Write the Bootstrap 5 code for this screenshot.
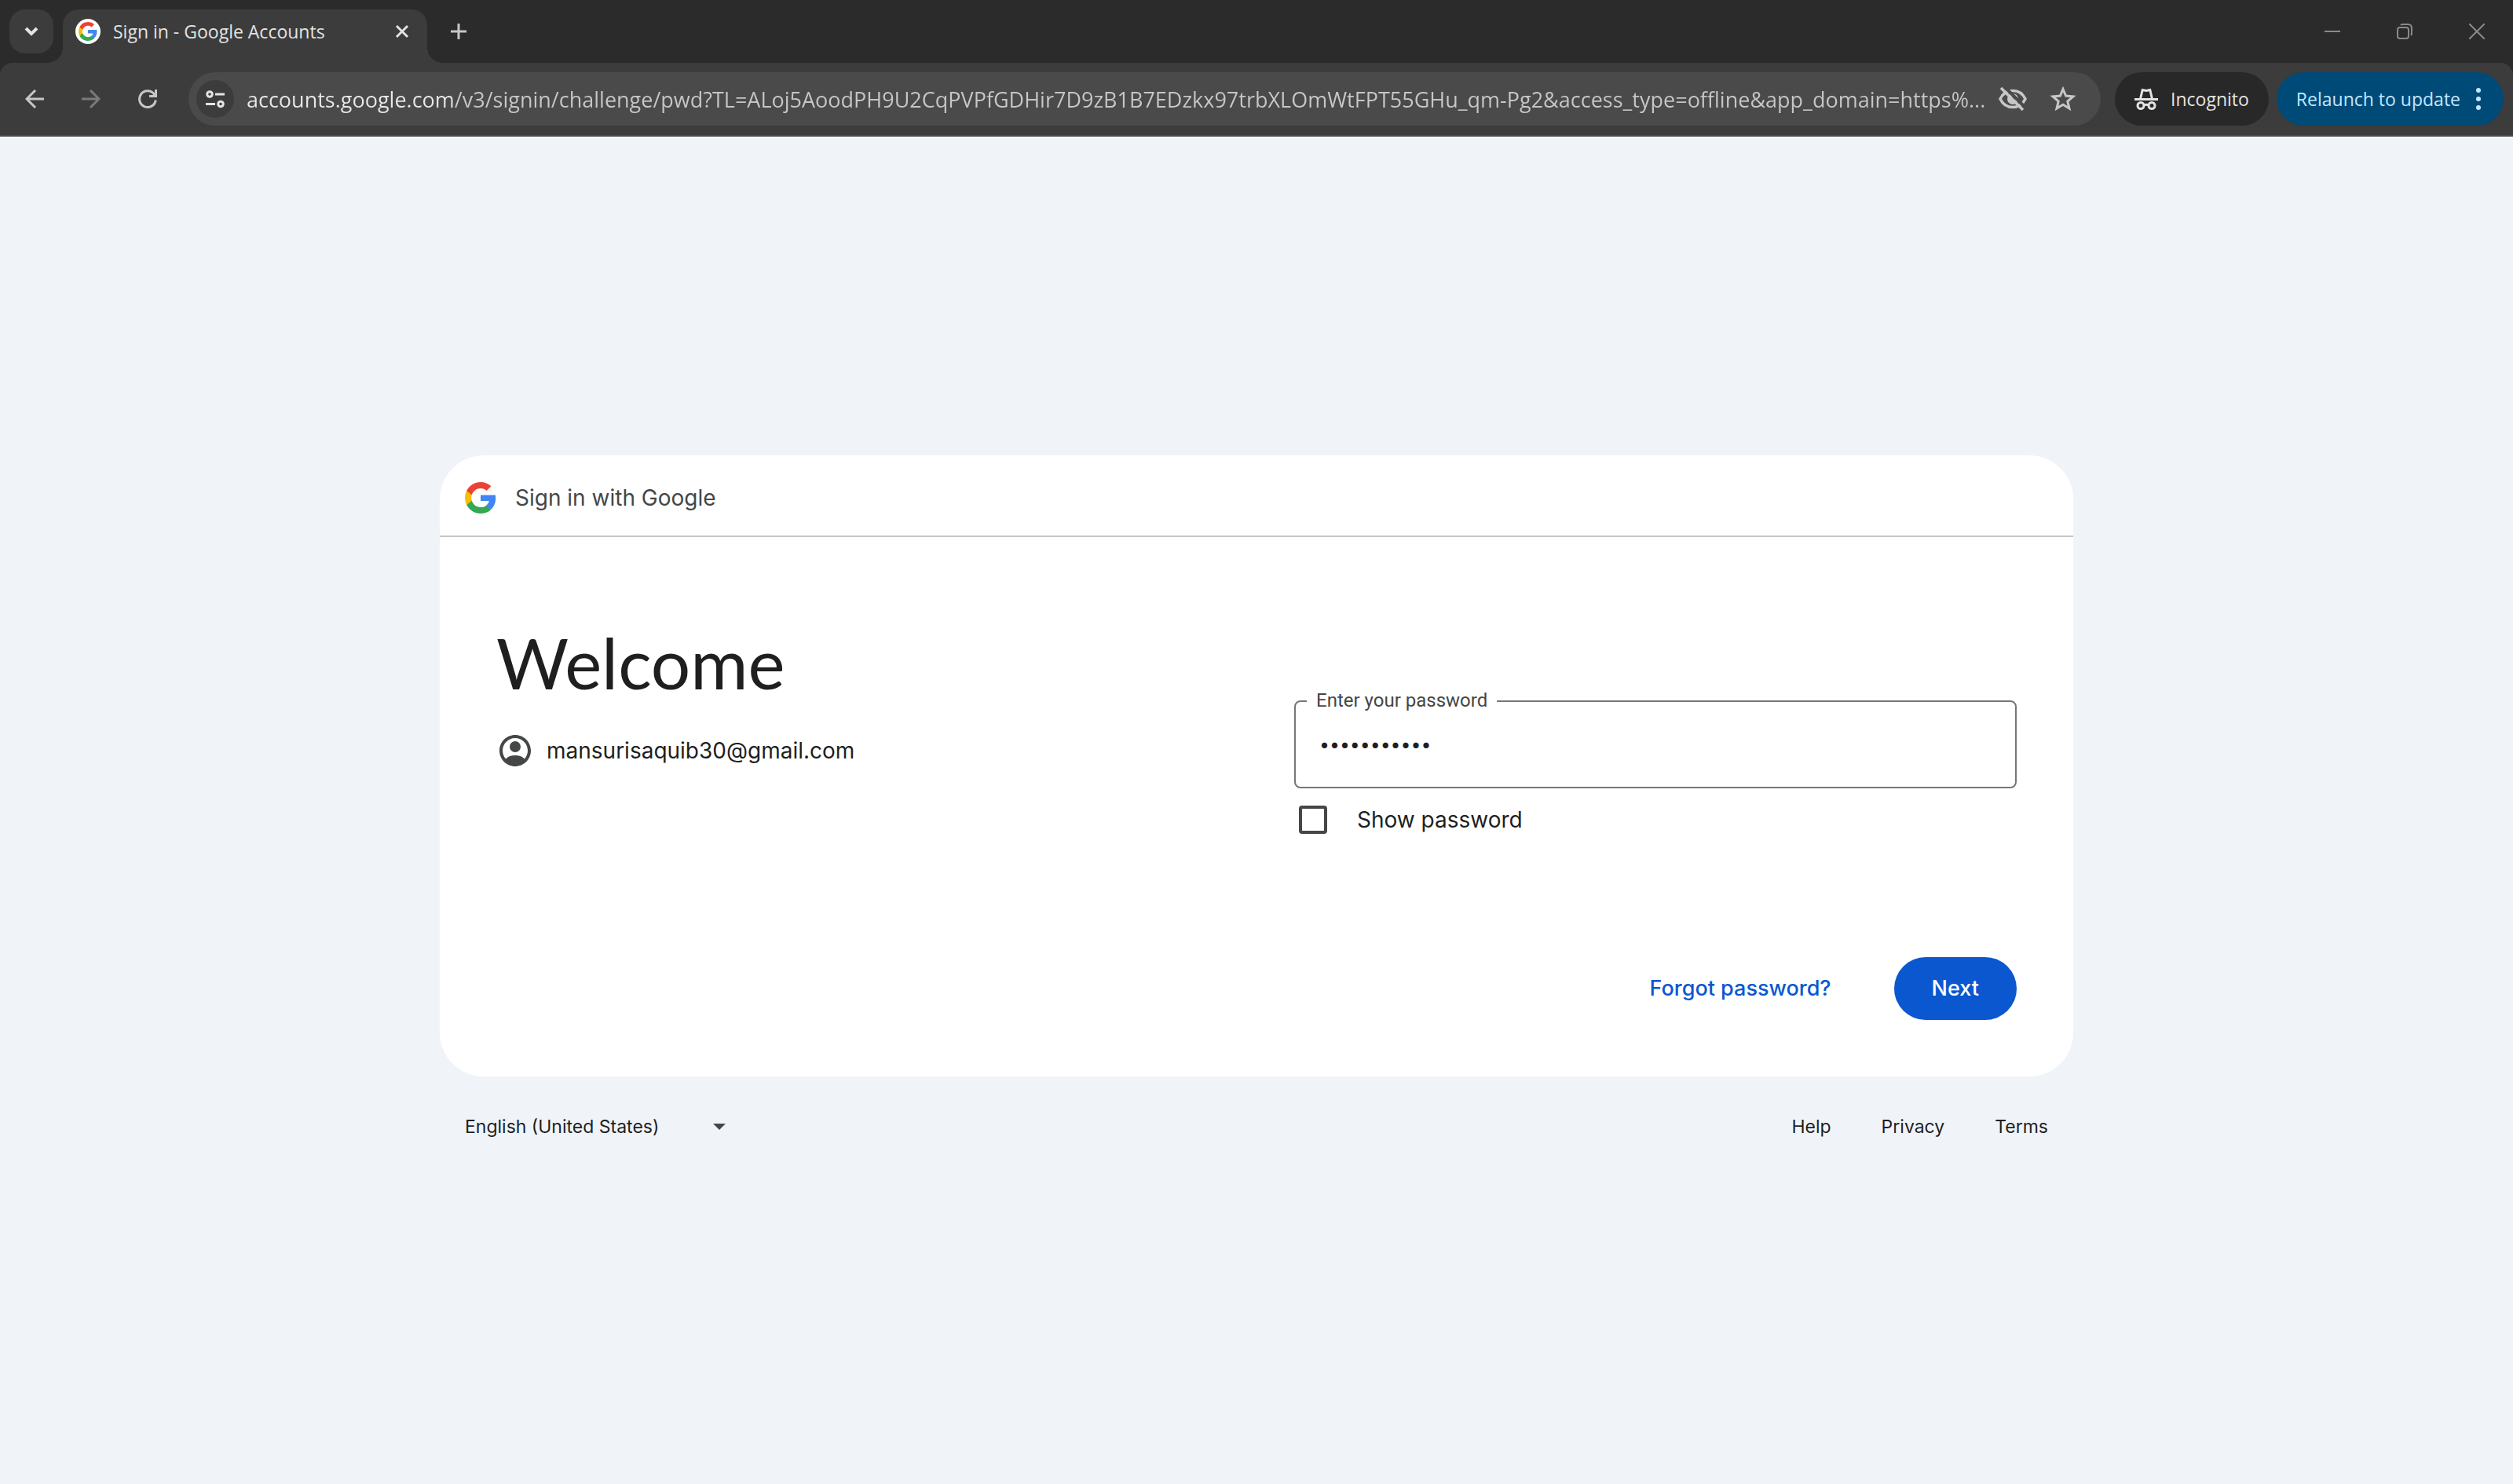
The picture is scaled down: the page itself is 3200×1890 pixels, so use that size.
<!DOCTYPE html>
<html lang="en">
<head>
<meta charset="utf-8">
<meta name="viewport" content="width=device-width, initial-scale=1">
<title>Sign in - Google Accounts</title>
<link rel="stylesheet" href="https://cdn.jsdelivr.net/npm/bootstrap@5.3.0/dist/css/bootstrap.min.css">
<style>
  body { background: #f0f4f9; color: #1f1f1f; font: 400 28px/40px Inter, sans-serif; }
  svg { display: block; flex: none; }
  button { background: none; border: 0; padding: 0; color: inherit; font: inherit; }

  /* browser frame */
  .frame { font: 400 23px/32px "Open Sans", "Noto Sans", sans-serif; color: #e3e3e3; background: #2b2b2b; }
  .strip { height: 80px; padding-left: 12px; }
  .tab-search { width: 56px; height: 56px; border-radius: 20px; background: #3c3c3c; }
  .tab-item { position: relative; width: 464px; height: 68px; margin-left: 12px; padding: 0 22px 12px 16px; border-radius: 20px 20px 0 0; background: #3c3c3c; }
  .tab-item::before, .tab-item::after { content: ""; position: absolute; bottom: 0; width: 20px; height: 20px; }
  .tab-item::before { right: 100%; background: radial-gradient(circle at 0 0, transparent 20px, #3c3c3c 20px); }
  .tab-item::after { left: 100%; background: radial-gradient(circle at 100% 0, transparent 20px, #3c3c3c 20px); }
  .favicon { width: 32px; height: 32px; background: #fff; }
  .tab-add { width: 80px; height: 56px; }
  .win-btn { width: 92px; height: 80px; color: #8a8a8a; }
  .tools { height: 94px; padding: 0 12px 0 8px; background: #3c3c3c; border-bottom: 2px solid #4a4a4a; border-radius: 16px 16px 0 0; }
  .tool-btn { width: 72px; height: 68px; color: #c7c7c7; }
  .tool-btn:disabled { color: #7a7a7a; }
  .omnibox { height: 68px; margin: 0 18px 0 16px; padding: 0 30px 0 10px; border-radius: 34px; background: #4a4a4a; color: #c7c7c7; }
  .site-info { width: 48px; height: 48px; background: #3c3c3c; color: #e3e3e3; }
  .url-input { min-width: 0; height: 48px; margin-left: 16px; padding: 0; border: 0; outline: 0; font-size: 27px; color: #c7c7c7; background: linear-gradient(90deg, #e8e8e8 262px, #c7c7c7 262px); -webkit-background-clip: text; background-clip: text; -webkit-text-fill-color: transparent; }
  .omni-actions { gap: 28px; }
  .chip { height: 68px; padding: 0 25px; border-radius: 34px; background: #282828; white-space: nowrap; }
  .chip-update { margin-left: 10px; background: #004a77; color: #c2e7ff; }

  /* sign-in page */
  .stage { min-height: calc(100vh - 174px); }
  .panel { width: 65%; }
  .sheet { border-radius: 56px; background: #fff; }
  .sheet-head { height: 104px; padding: 6px 32px 0; border-bottom: 2px solid #c4c7c5; color: #444746; }
  .sheet-body { padding: 108px 72px 72px; }
  .cols { display: grid; grid-template-columns: 1fr 1fr; gap: 96px; }
  h1 { font: 400 89px/104px Lato, sans-serif; margin: 0 0 36px; }
  .form-col { padding-top: 100px; }
  .pwd-input { width: 100%; height: 112px; padding: 0 30px; border: 2px solid #747775; border-radius: 8px; font: 400 23px/40px Inter, sans-serif; color: #1f1f1f; background: #fff; outline: 0; }
  .pwd-label { position: absolute; left: 16px; top: -16px; padding: 0 12px; font: 400 24px/32px Roboto, sans-serif; color: #444746; background: #fff; }
  .tick { appearance: none; width: 36px; height: 36px; margin: 0; border: 4px solid #444746; border-radius: 4px; }
  .tick:checked { background: #0b57d0; }
  .show-row { margin: 20px 0 0 6px; gap: 38px; }
  .actions { margin-top: 155px; gap: 80px; font-weight: 500; font-size: 27px; }
  .forgot { color: #0b57d0; }
  .next { height: 80px; padding: 0 48px; border-radius: 40px; background: #0b57d0; color: #fff; }
  .foot { padding: 40px 32px 26px; font: 400 23px/48px Inter, sans-serif; }
  .foot a { color: inherit; text-decoration: none; }
  .foot-links { gap: 64px; }
  .lang { appearance: none; width: 340px; height: 48px; border: 0; padding: 0; background: none; font: inherit; color: inherit; }
  .lang-arrow { position: absolute; right: 8px; top: 20px; pointer-events: none; }
</style>
<script src="https://cdn.jsdelivr.net/npm/bootstrap@5.3.0/dist/js/bootstrap.bundle.min.js"></script>
</head>
<body>

<svg width="0" height="0" class="position-absolute" aria-hidden="true">
  <symbol id="g-logo" viewBox="-.5 -.5 49 49">
    <path fill="#4285F4" d="M47.500 24.500c0-1.600-.2-3.200-.4-4.700H24v9.100h13.200c-.6 3-2.300 5.500-4.900 7.200v6h7.900c4.600-4.300 7.300-10.500 7.300-17.600z"/>
    <path fill="#34A853" d="M24 48.500c6.600 0 12.200-2.200 16.200-5.900l-7.900-6.100c-2.200 1.500-5 2.300-8.300 2.300-6.400 0-11.800-4.300-13.700-10.100H2.200v6.300C6.200 42.900 14.400 48.500 24 48.500z"/>
    <path fill="#FBBC05" d="M10.300 28.700c-.5-1.500-.8-3-.8-4.700s.3-3.200.8-4.700V13H2.200C.5 16.300-.4 20-.4 24s.9 7.700 2.600 11z"/>
    <path fill="#EA4335" d="M24 9.300c3.600 0 6.800 1.200 9.400 3.700l7-7C36.200 2 30.600-.5 24-.5 14.400-.5 6.200 5.100 2.200 13l8.100 6.300C12.200 13.600 17.600 9.300 24 9.300z"/>
  </symbol>
</svg>

<header class="frame">
  <div class="strip d-flex align-items-end">
    <button class="tab-search d-flex align-items-center justify-content-center align-self-center" aria-label="Search tabs">
      <svg width="18" height="12" viewBox="0 0 18 12" fill="none" stroke="currentColor" stroke-width="4"><path d="M2 2l7 7 7-7"/></svg>
    </button>
    <div class="tab-item d-flex align-items-center">
      <span class="favicon rounded-circle d-flex align-items-center justify-content-center me-3"><svg width="24" height="24"><use href="#g-logo"/></svg></span>
      <span class="flex-grow-1">Sign in - Google Accounts</span>
      <button aria-label="Close tab"><svg width="20" height="20" viewBox="0 0 20 20" stroke="currentColor" stroke-width="3"><path d="M3 3l14 14M17 3L3 17"/></svg></button>
    </div>
    <button class="tab-add d-flex align-items-center justify-content-center align-self-center" aria-label="New tab">
      <svg width="20" height="20" viewBox="0 0 20 20" stroke="#c7c7c7" stroke-width="3"><path d="M0 10h20M10 0v20"/></svg>
    </button>
    <div class="d-flex ms-auto">
      <button class="win-btn d-flex align-items-center justify-content-center" aria-label="Minimize"><svg width="20" height="20" stroke="currentColor" stroke-width="2"><path d="M0 10h20"/></svg></button>
      <button class="win-btn d-flex align-items-center justify-content-center" aria-label="Restore"><svg width="20" height="20" fill="none" stroke="currentColor" stroke-width="2"><rect x="1" y="5" width="14" height="14" rx="3"/><path d="M5 2q1-1 3-1h6q5 0 5 5v6q0 2-1 3"/></svg></button>
      <button class="win-btn d-flex align-items-center justify-content-center" aria-label="Close"><svg width="20" height="20" stroke="currentColor" stroke-width="2"><path d="M0 0l20 20M20 0L0 20"/></svg></button>
    </div>
  </div>
  <div class="tools d-flex align-items-center">
    <button class="tool-btn d-flex align-items-center justify-content-center" aria-label="Back"><svg width="24" height="24" fill="none" stroke="currentColor" stroke-width="3"><path d="M24 12H3M13 1L2 12l11 11"/></svg></button>
    <button class="tool-btn d-flex align-items-center justify-content-center" aria-label="Forward" disabled><svg width="24" height="24" fill="none" stroke="currentColor" stroke-width="3"><path d="M0 12h21M11 1l11 11-11 11"/></svg></button>
    <button class="tool-btn d-flex align-items-center justify-content-center" aria-label="Reload"><svg width="24" height="24" fill="none" stroke="currentColor" stroke-width="3"><path d="M22.300 13.500A10.400 10.400 0 1 1 20 5.500L21 8M22.500 0v8.500H14"/></svg></button>
    <div class="omnibox d-flex align-items-center flex-grow-1">
      <button class="site-info rounded-circle d-flex align-items-center justify-content-center" aria-label="View site information">
        <svg width="24" height="24" fill="none" stroke="currentColor" stroke-width="3"><circle cx="5" cy="6" r="3.300"/><path d="M12 6h12M0 18.500h12"/><circle cx="19" cy="18.500" r="3.300"/></svg>
      </button>
      <input class="url-input flex-grow-1" type="text" aria-label="Address and search bar" value="accounts.google.com/v3/signin/challenge/pwd?TL=ALoj5AoodPH9U2CqPVPfGDHir7D9zB1B7EDzkx97trbXLOmWtFPT55GHu_qm-Pg2&amp;access_type=offline&amp;app_domain=https%...">
      <div class="omni-actions d-flex align-items-center ms-2">
        <button aria-label="Third-party cookies blocked">
          <svg width="36" height="32" viewBox="0 0 36 32"><path fill="none" stroke="currentColor" stroke-width="3.500" d="M2 16Q7 5.500 18 5.500T34 16Q29 26.500 18 26.500T2 16z"/><circle cx="18" cy="16" r="7" fill="currentColor"/><circle cx="19" cy="15" r="2.500" fill="#4a4a4a"/><path stroke="#4a4a4a" stroke-width="4" d="M7 0l27 27"/><path stroke="currentColor" stroke-width="3.500" d="M3 2l28 28"/></svg>
        </button>
        <button aria-label="Bookmark this tab">
          <svg width="36" height="32" viewBox="0 0 36 32"><path fill="none" stroke="currentColor" stroke-width="3" d="M18 3.500l3.600 8.600 9.300.8-7.100 6.100 2.200 9.100-8-4.900-8 4.900 2.200-9.100-7.100-6.100 9.300-.8z"/></svg>
        </button>
      </div>
    </div>
    <button class="chip d-flex align-items-center">
      <svg width="30" height="28" viewBox="1 0 30 28" fill="none" stroke="currentColor" stroke-width="3"><path d="M1 14.500h30M8.500 14l2.700-11.500 4.800 1 4.800-1L23.500 14"/><circle cx="9" cy="22.500" r="4"/><circle cx="23" cy="22.500" r="4"/><path d="M13 22q3-1.500 6 0"/></svg>
      <span class="ms-3">Incognito</span>
    </button>
    <button class="chip chip-update d-flex align-items-center">
      <span>Relaunch to update</span>
      <svg class="ms-3" width="14" height="30" fill="currentColor"><circle cx="7" cy="4" r="3"/><circle cx="7" cy="15" r="3"/><circle cx="7" cy="26" r="3"/></svg>
    </button>
  </div>
</header>

<main class="stage d-flex flex-column align-items-center justify-content-center">
  <div class="panel">
    <form class="sheet" onsubmit="return false">
      <div class="sheet-head d-flex align-items-center">
        <svg width="40" height="40" class="me-4"><use href="#g-logo"/></svg>
        <span>Sign in with Google</span>
      </div>
      <div class="sheet-body">
        <div class="cols">
          <div>
            <h1>Welcome</h1>
            <div class="d-flex align-items-center">
              <svg width="48" height="48" viewBox="0 0 24 24" fill="#444746"><path d="M12 2C6.480 2 2 6.480 2 12s4.480 10 10 10 10-4.480 10-10S17.520 2 12 2zM6 17.200C4.800 15.800 4 14 4 12c0-4.400 3.600-8 8-8s8 3.600 8 8c0 2-.8 3.800-2 5.200C16.500 15.700 14.400 15 12 15s-4.500.7-6 2.200z"/><circle cx="12" cy="9.500" r="3.500"/></svg>
              <span class="ms-3">mansurisaquib30@gmail.com</span>
            </div>
          </div>
          <div class="form-col">
            <div class="position-relative">
              <input class="pwd-input d-block" id="pwd" type="password" value="12345678901">
              <label class="pwd-label" for="pwd">Enter your password</label>
            </div>
            <div class="show-row d-flex align-items-center">
              <input class="tick" id="show" type="checkbox">
              <label for="show">Show password</label>
            </div>
          </div>
        </div>
        <div class="actions d-flex align-items-center justify-content-end">
          <button type="button" class="forgot">Forgot password?</button>
          <button type="submit" class="next">Next</button>
        </div>
      </div>
    </form>
    <footer class="foot d-flex justify-content-between">
      <div class="position-relative">
        <select class="lang d-block" aria-label="Language"><option>English (United States)</option></select>
        <svg class="lang-arrow" width="16" height="8" fill="#444746"><path d="M0 0h16L8 8z"/></svg>
      </div>
      <nav class="foot-links d-flex" aria-label="Footer"><a href="#">Help</a><a href="#">Privacy</a><a href="#">Terms</a></nav>
    </footer>
  </div>
</main>
</body>
</html>
